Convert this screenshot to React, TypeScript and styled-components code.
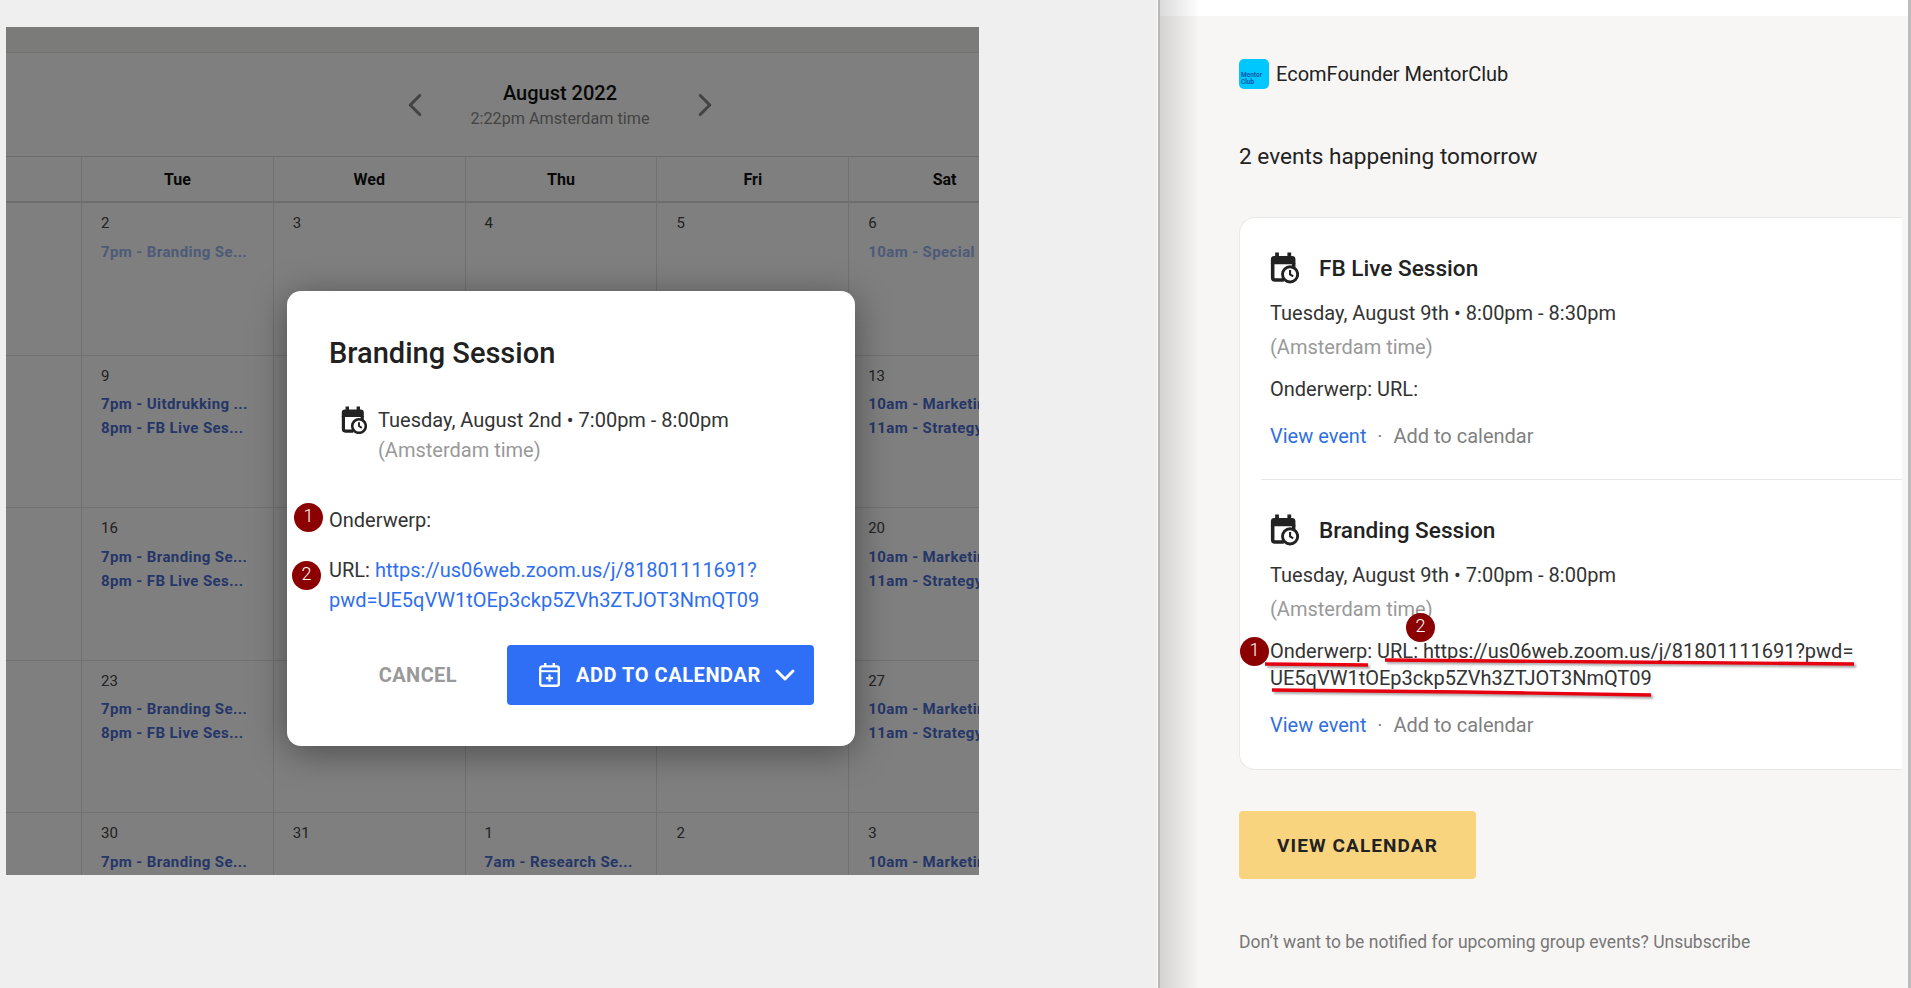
import React from "react";
import styled, { createGlobalStyle } from "styled-components";
import { ChevronDown, ChevronLeft, ChevronRight } from "lucide-react";

const GlobalStyle = createGlobalStyle`
  html, body {
    margin: 0;
    padding: 0;
    height: 100%;
    overflow: hidden;
    background: #fff;
    font-family: Roboto, "Liberation Sans", sans-serif;
    color: #222;
  }
  * { box-sizing: border-box; }
`;

const Page = styled.div`
  display: flex;
  width: 1911px;
  height: 988px;
  overflow: hidden;
`;

const LeftPane = styled.div`
  flex: 0 0 1158px;
  padding: 27px 4px 0 6px;
  background: #efefef;
  border-right: 1px solid #fbfbfb;
`;

const CalendarFrame = styled.div`
  position: relative;
  width: 973px;
  height: 848px;
  background: #fff;
  overflow: hidden;
`;

const Dimmer = styled.div`
  position: absolute;
  inset: 0;
  background: rgba(0, 0, 0, 0.5);
`;

const CalendarTopBar = styled.div`
  height: 26px;
  background: #f7f6f4;
  border-bottom: 1px solid #e4e4e2;
`;

const MonthBar = styled.div`
  display: flex;
  align-items: center;
  justify-content: center;
  gap: 36px;
  width: 1108px;
  height: 103px;
  color: #888;
`;

const MonthTitle = styled.div`
  width: 180px;
  padding-top: 3px;
  text-align: center;
  white-space: nowrap;
`;

const MonthName = styled.div`
  font-size: 20px;
  font-weight: 500;
  line-height: 26px;
  color: #111;
`;

const LocalTime = styled.div`
  font-size: 16.2px;
  line-height: 26px;
  color: #888;
`;

const WeekHeader = styled.div`
  display: grid;
  grid-template-columns: 75px repeat(5, 191.8px);
  height: 47px;
  border-top: 1px solid #d8d8d8;
  border-bottom: 2px solid #dcdcdc;
`;

const WeekDay = styled.div`
  display: flex;
  align-items: center;
  justify-content: center;
  border-left: 1px solid #e2e2e2;
  font-size: 16px;
  font-weight: 700;
  color: #111;
  &:first-child { border-left: 0; }
`;

const WeekRow = styled.div`
  display: grid;
  grid-template-columns: 75px repeat(5, 191.8px);
  height: 152.6px;
  border-bottom: 1px solid #e2e2e2;
`;

const DayCell = styled.div`
  min-width: 0;
  padding: 10px 0 0 19px;
  border-left: 1px solid #e2e2e2;
  &:first-child { border-left: 0; }
`;

const DayNumber = styled.div`
  height: 20px;
  font-size: 15px;
  line-height: 20px;
  color: #444;
  margin-bottom: 6.5px;
`;

const DayEvent = styled.div<{ $past?: boolean }>`
  font-size: 15px;
  font-weight: 700;
  line-height: 24px;
  letter-spacing: 0.4px;
  white-space: nowrap;
  color: ${(p) => (p.$past ? "#9ab4f0" : "#4a6cd0")};
`;

const Modal = styled.div`
  position: absolute;
  left: 281px;
  top: 264px;
  display: flex;
  flex-direction: column;
  width: 568px;
  height: 455px;
  padding: 44px 41px 41px 42px;
  background: #fff;
  border-radius: 14px;
  box-shadow: 0 6px 36px rgba(0, 0, 0, 0.4);
`;

const ModalTitle = styled.h2`
  margin: 0 0 34px;
  font-size: 29px;
  font-weight: 500;
  line-height: 36px;
  color: #212121;
`;

const ModalWhen = styled.div`
  display: flex;
  gap: 11px;
  padding-left: 12px;
  font-size: 20px;
  line-height: 30px;
  color: #333;
`;

const IconSlot = styled.div`
  flex: 0 0 26px;
  padding-top: 1px;
`;

const Muted = styled.div`
  color: #999;
`;

const ModalLine = styled.div<{ $gap: number }>`
  position: relative;
  margin-top: ${(p) => p.$gap}px;
  font-size: 20px;
  line-height: 30px;
  color: #333;
`;

const ModalLink = styled.a`
  color: #2f6fed;
  text-decoration: none;
`;

const ModalActions = styled.div`
  display: flex;
  align-items: center;
  justify-content: flex-end;
  gap: 50px;
  margin-top: 30px;
`;

const CancelButton = styled.button`
  padding: 0;
  border: 0;
  background: none;
  font: 700 20px Roboto, sans-serif;
  letter-spacing: 0.4px;
  color: #999;
`;

const AddButton = styled.button`
  display: flex;
  align-items: center;
  gap: 16px;
  width: 307px;
  height: 60px;
  padding: 0 0 0 32px;
  border: 0;
  border-radius: 4px;
  background: #2f6ff5;
  color: #fff;
  font: 700 20px Roboto, sans-serif;
  letter-spacing: 0.55px;
`;

const AddChevron = styled(ChevronDown)`
  margin-left: -8px;
`;

const Badge = styled.span<{ $left: number; $top: number }>`
  position: absolute;
  left: ${(p) => p.$left}px;
  top: ${(p) => p.$top}px;
  display: flex;
  align-items: center;
  justify-content: center;
  width: 29px;
  height: 29px;
  padding-bottom: 3px;
  border-radius: 50%;
  background: #8b0000;
  color: #fff;
  font-size: 18px;
  font-weight: 300;
  line-height: 1;
`;

const RightPane = styled.div`
  position: relative;
  flex: 0 0 750px;
  height: 100%;
  background: #f7f6f4;
  border-left: 2px solid #b7b7b7;
  &::before {
    content: "";
    position: absolute;
    left: 0;
    top: 0;
    bottom: 0;
    width: 40px;
    background: linear-gradient(90deg, rgba(0, 0, 0, 0.14), rgba(0, 0, 0, 0));
  }
`;

const RightEdge = styled.div`
  flex: 1;
  background: #ececec;
  border-right: 3px solid #bcbcbc;
  margin-right: 1px;
`;

const TopStrip = styled.div`
  height: 16px;
  background: #fff;
`;

const Mail = styled.div`
  padding: 43px 0 0 79px;
`;

const Brand = styled.div`
  display: flex;
  align-items: center;
  gap: 7px;
  height: 30px;
  font-size: 20px;
  color: #222;
`;

const BrandLogo = styled.div`
  display: flex;
  flex-direction: column;
  justify-content: flex-end;
  width: 30px;
  height: 30px;
  padding: 0 0 3px 2px;
  border-radius: 5px;
  background: #00c8ff;
  color: #0a5aa8;
  font-size: 6.5px;
  font-weight: 700;
  line-height: 7px;
`;

const Headline = styled.div`
  margin-top: 53px;
  font-size: 22.6px;
  line-height: 30px;
  color: #222;
`;

const EventCard = styled.div`
  width: 663px;
  height: 553px;
  margin-top: 45px;
  background: #fff;
  border: 1px solid #e8e8e6;
  border-right: 0;
  border-radius: 16px 0 0 16px;
`;

const EventBlock = styled.div<{ $divided?: boolean }>`
  margin-left: 21px;
  padding: 36px 0 ${(p) => (p.$divided ? 29 : 0)}px 9px;
  border-bottom: ${(p) => (p.$divided ? "1px solid #e8e8e6" : "0")};
`;

const EventHead = styled.div`
  display: flex;
  align-items: center;
  gap: 20px;
  height: 28px;
  font-size: 22.6px;
  font-weight: 500;
  color: #222;
`;

const EventText = styled.div<{ $gap: number }>`
  position: relative;
  margin-top: ${(p) => p.$gap}px;
  font-size: 20px;
  line-height: 28px;
  color: #333;
`;

const EventWrapped = styled(EventText)`
  line-height: 27px;
`;

const EventActions = styled.div`
  display: flex;
  align-items: center;
  margin-top: 19px;
  font-size: 20px;
  line-height: 28px;
  color: #808080;
`;

const ViewLink = styled.a`
  color: #2f6fe0;
  text-decoration: none;
`;

const ActionDot = styled.span`
  width: 27px;
  text-align: center;
`;

const Markup = styled.svg`
  position: absolute;
  left: -10px;
  top: 0;
  filter: drop-shadow(2px 2px 1px rgba(0, 0, 0, 0.35));
  pointer-events: none;
`;

const CalendarButton = styled.div`
  display: flex;
  align-items: center;
  justify-content: center;
  width: 237px;
  height: 68px;
  margin-top: 41px;
  border-radius: 4px;
  background: #f8d47e;
  font-size: 19px;
  font-weight: 700;
  letter-spacing: 1.1px;
  color: #222;
`;

const Footnote = styled.div`
  margin-top: 51px;
  font-size: 17.5px;
  line-height: 24px;
  color: #777;
`;

const CalendarClockIcon = ({ size }: { size: number }) => (
  <svg width={size} height={size * 1.08} viewBox="0 0 26 28" fill="none">
    <path d="M4.6 0.5h3.4v4H4.6zM15.6 0.5H19v4h-3.4z" fill="#222" />
    <path d="M0.8 6.5A3 3 0 0 1 3.8 3.5h16a3 3 0 0 1 3 3V11h-22z" fill="#222" />
    <path d="M2.4 10v13a2 2 0 0 0 2 2h8" stroke="#222" strokeWidth="3.2" />
    <path d="M21.2 10v4" stroke="#222" strokeWidth="3.2" />
    <circle cx="18" cy="20" r="6.8" fill="#fff" stroke="#222" strokeWidth="2.6" />
    <path d="M18 16.2V20l2.8 1.8" stroke="#222" strokeWidth="1.9" />
  </svg>
);

const CalendarPlusIcon = () => (
  <svg width="21" height="24" viewBox="0 0 21 24" fill="none">
    <path d="M5 0h2.4v4H5zM13.6 0H16v4h-2.4z" fill="#fff" />
    <rect x="1.2" y="3.4" width="18.6" height="19.4" rx="2" stroke="#fff" strokeWidth="2.4" />
    <path d="M1 8.2h19" stroke="#fff" strokeWidth="2" />
    <path d="M10.5 11.6v7.2M6.9 15.2h7.2" stroke="#fff" strokeWidth="2.2" />
  </svg>
);

type Day = { n: number; events?: string[]; past?: boolean };

const weeks: Day[][] = [
  [
    { n: 1 },
    { n: 2, events: ["7pm - Branding Se..."], past: true },
    { n: 3 },
    { n: 4 },
    { n: 5 },
    { n: 6, events: ["10am - Special Session"], past: true },
  ],
  [
    { n: 8 },
    { n: 9, events: ["7pm - Uitdrukking ...", "8pm - FB Live Ses..."] },
    { n: 10 },
    { n: 11 },
    { n: 12 },
    { n: 13, events: ["10am - Marketing Session", "11am - Strategy Session"] },
  ],
  [
    { n: 15 },
    { n: 16, events: ["7pm - Branding Se...", "8pm - FB Live Ses..."] },
    { n: 17 },
    { n: 18 },
    { n: 19 },
    { n: 20, events: ["10am - Marketing Session", "11am - Strategy Session"] },
  ],
  [
    { n: 22 },
    { n: 23, events: ["7pm - Branding Se...", "8pm - FB Live Ses..."] },
    { n: 24 },
    { n: 25 },
    { n: 26 },
    { n: 27, events: ["10am - Marketing Session", "11am - Strategy Session"] },
  ],
  [
    { n: 29 },
    { n: 30, events: ["7pm - Branding Se..."] },
    { n: 31 },
    { n: 1, events: ["7am - Research Se..."] },
    { n: 2 },
    { n: 3, events: ["10am - Marketing Session"] },
  ],
];

const weekDays = ["Mon", "Tue", "Wed", "Thu", "Fri", "Sat"];

const App = () => {
  return (
    <Page>
      <GlobalStyle />
      <LeftPane>
        <CalendarFrame>
          <CalendarTopBar />
          <MonthBar>
            <ChevronLeft size={38} strokeWidth={2} />
            <MonthTitle>
              <MonthName>August 2022</MonthName>
              <LocalTime>2:22pm Amsterdam time</LocalTime>
            </MonthTitle>
            <ChevronRight size={38} strokeWidth={2} />
          </MonthBar>
          <WeekHeader>
            {weekDays.map((day, index) => (
              <WeekDay key={day}>{index === 0 ? "" : day}</WeekDay>
            ))}
          </WeekHeader>
          {weeks.map((week) => (
            <WeekRow key={week[1].n}>
              {week.map((day, index) => (
                <DayCell key={day.n}>
                  {index > 0 && <DayNumber>{day.n}</DayNumber>}
                  {index > 0 &&
                    day.events?.map((event) => (
                      <DayEvent key={event} $past={day.past}>
                        {event}
                      </DayEvent>
                    ))}
                </DayCell>
              ))}
            </WeekRow>
          ))}
          <Dimmer />
          <Modal>
            <ModalTitle>Branding Session</ModalTitle>
            <ModalWhen>
              <IconSlot>
                <CalendarClockIcon size={26} />
              </IconSlot>
              <div>
                <div>Tuesday, August 2nd • 7:00pm - 8:00pm</div>
                <Muted>(Amsterdam time)</Muted>
              </div>
            </ModalWhen>
            <ModalLine $gap={40}>
              <Badge $left={-35} $top={-2}>1</Badge>
              Onderwerp:
            </ModalLine>
            <ModalLine $gap={20}>
              <Badge $left={-37} $top={6}>2</Badge>
              URL:{" "}
              <ModalLink>
                https://us06web.zoom.us/j/81801111691?
                <br />
                pwd=UE5qVW1tOEp3ckp5ZVh3ZTJOT3NmQT09
              </ModalLink>
            </ModalLine>
            <ModalActions>
              <CancelButton>CANCEL</CancelButton>
              <AddButton>
                <CalendarPlusIcon />
                ADD TO CALENDAR
                <AddChevron size={32} strokeWidth={2.2} />
              </AddButton>
            </ModalActions>
          </Modal>
        </CalendarFrame>
      </LeftPane>
      <RightPane>
        <TopStrip />
        <Mail>
          <Brand>
            <BrandLogo>
              <span>Mentor</span>
              <span>Club</span>
            </BrandLogo>
            EcomFounder MentorClub
          </Brand>
          <Headline>2 events happening tomorrow</Headline>
          <EventCard>
            <EventBlock $divided>
              <EventHead>
                <CalendarClockIcon size={29} />
                FB Live Session
              </EventHead>
              <EventText $gap={17}>Tuesday, August 9th • 8:00pm - 8:30pm</EventText>
              <EventText $gap={6}>
                <Muted>(Amsterdam time)</Muted>
              </EventText>
              <EventText $gap={14}>Onderwerp: URL:</EventText>
              <EventActions>
                <ViewLink>View event</ViewLink>
                <ActionDot>·</ActionDot>
                Add to calendar
              </EventActions>
            </EventBlock>
            <EventBlock>
              <EventHead>
                <CalendarClockIcon size={29} />
                Branding Session
              </EventHead>
              <EventText $gap={17}>Tuesday, August 9th • 7:00pm - 8:00pm</EventText>
              <EventText $gap={6}>
                <Muted>(Amsterdam time)</Muted>
              </EventText>
              <EventWrapped $gap={15}>
                Onderwerp: URL: https://us06web.zoom.us/j/81801111691?pwd=
                <br />
                UE5qVW1tOEp3ckp5ZVh3ZTJOT3NmQT09
                <Markup width="620" height="70" viewBox="0 0 620 70" fill="none">
                  <path d="M5 26l103 1" stroke="#e6000f" strokeWidth="3.4" />
                  <path d="M125 22l235 2 234 2" stroke="#e6000f" strokeWidth="3.4" />
                  <path d="M12 52l190 2 189 3" stroke="#e6000f" strokeWidth="3.4" />
                </Markup>
                <Badge $left={-30} $top={-1}>1</Badge>
                <Badge $left={136} $top={-25}>2</Badge>
              </EventWrapped>
              <EventActions>
                <ViewLink>View event</ViewLink>
                <ActionDot>·</ActionDot>
                Add to calendar
              </EventActions>
            </EventBlock>
          </EventCard>
          <CalendarButton>VIEW CALENDAR</CalendarButton>
          <Footnote>Don’t want to be notified for upcoming group events? Unsubscribe</Footnote>
        </Mail>
      </RightPane>
      <RightEdge />
    </Page>
  );
};

export default App;
